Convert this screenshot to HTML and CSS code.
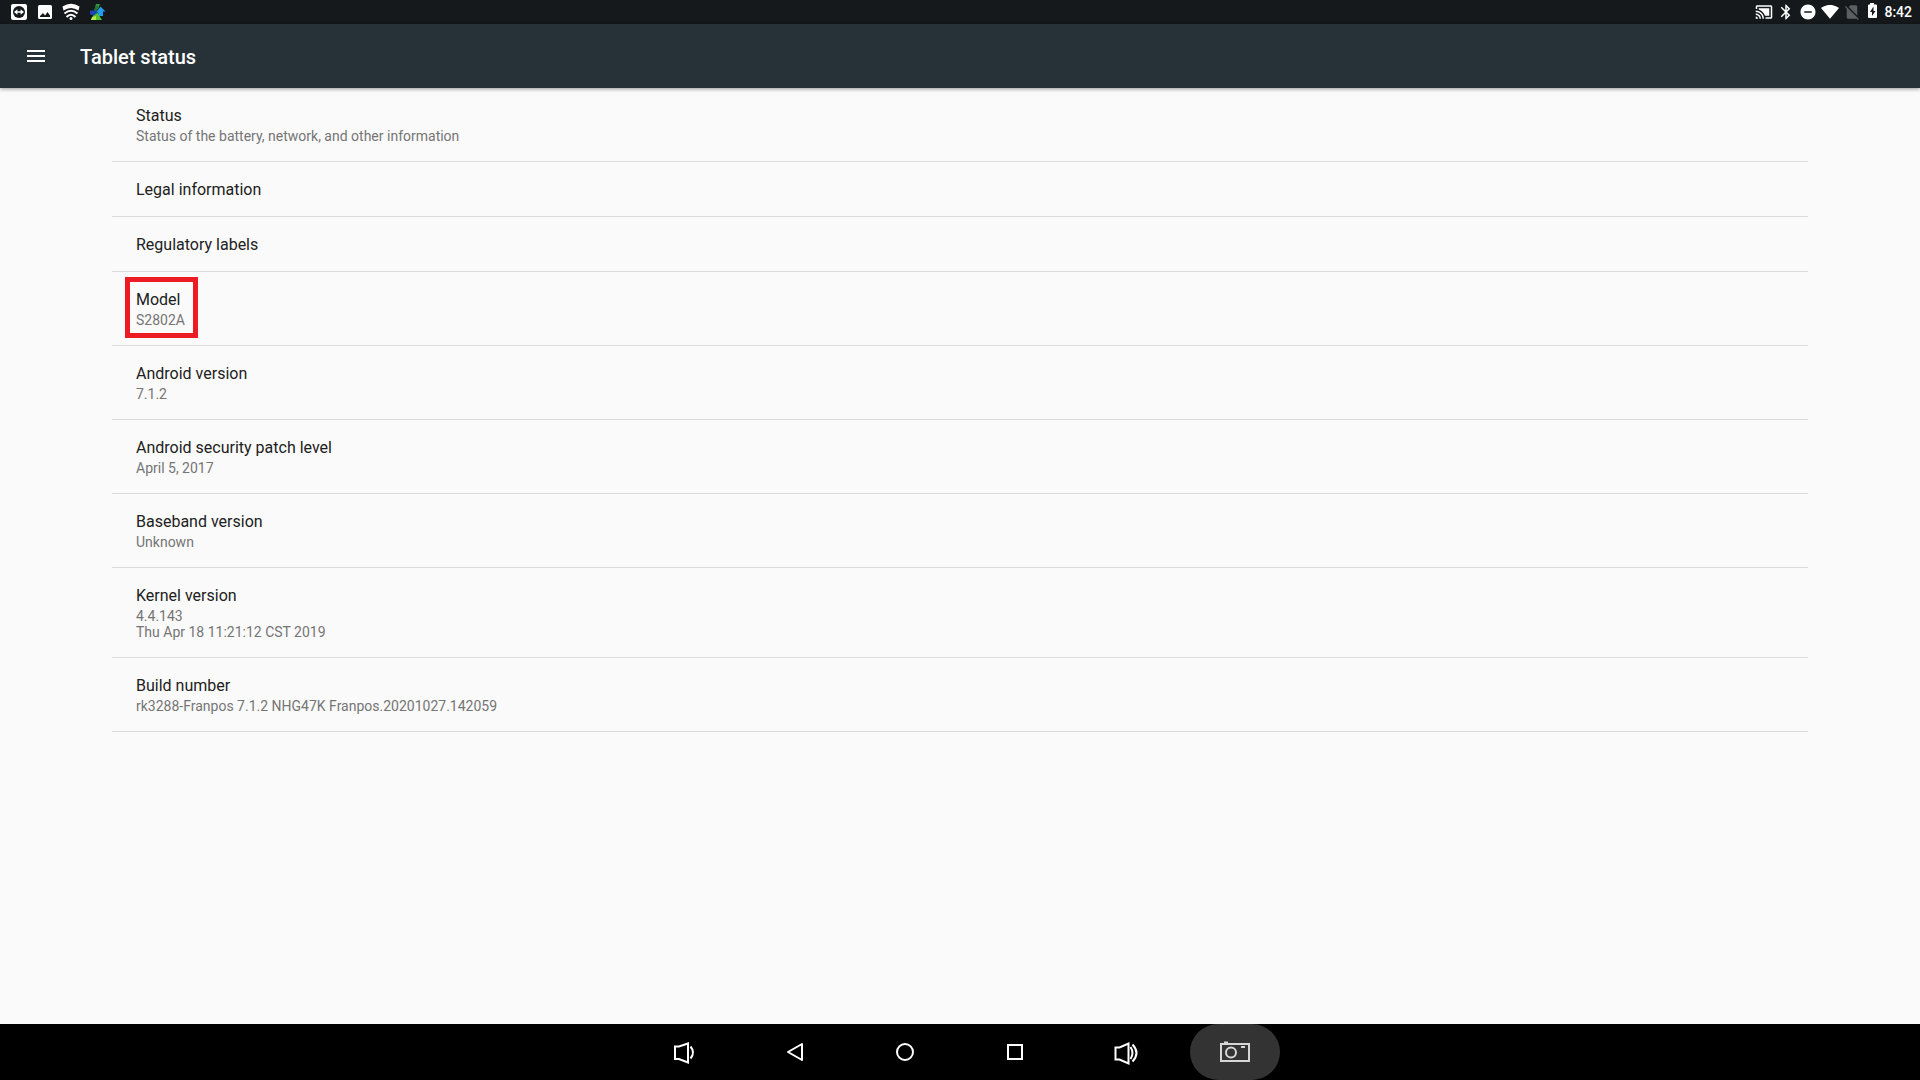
FILE: index.html
```
<!DOCTYPE html>
<html lang="en">
<head>
    <meta charset="UTF-8">
    <meta name="viewport" content="width=device-width, initial-scale=1.0">
    <title>Tablet status</title>
    <link rel="stylesheet" href="styles.css">
</head>
<body>
    <div class="status-bar">
        <div class="notifications">
            <!-- remote control -->
            <svg width="20" height="20" viewBox="0 0 20 20">
                <rect x="2" y="2" width="16" height="16" rx="2" fill="#fff"/>
                <circle cx="10" cy="10" r="6" fill="#15191c"/>
                <path d="M5 10l3.4-2.8v2h3.2v-2L15 10l-3.4 2.8v-2H8.4v2z" fill="#fff"/>
            </svg>
            <!-- picture -->
            <svg width="20" height="20" viewBox="0 0 20 20">
                <path fill="#fff" fill-rule="evenodd" d="M4.500 3h11a1.500 1.500 0 0 1 1.500 1.500v11a1.500 1.500 0 0 1-1.500 1.500h-11A1.500 1.500 0 0 1 3 15.500v-11A1.500 1.500 0 0 1 4.500 3zM5 15h10v-1.500l-2.500-3.500-2.500 3.500-2-2.500-3 3z"/>
            </svg>
            <!-- wifi -->
            <svg width="20" height="20" viewBox="0 0 20 20">
                <path d="M1.500 4.500Q10-1 18.500 4.500L17.500 8.500Q10 3.500 2.500 8.500z" fill="#fff"/>
                <g fill="none" stroke="#fff" stroke-width="2">
                    <path d="M3.500 11.500q6.500-5.500 13 0"/>
                    <path d="M5.500 15q4.500-4.500 9 0"/>
                </g>
                <circle cx="10" cy="16.500" r="1.500" fill="#fff"/>
            </svg>
            <!-- file transfer -->
            <svg width="20" height="20" viewBox="0 0 20 20">
                <path d="M9 2h4l-2 5-4 2z" fill="#2f9e3e"/>
                <path d="M8 5l3-2-1 6-3 2z" fill="#1e7133"/>
                <path d="M7 12l4-1 2 4 2 3H4z" fill="#52c22b"/>
                <path d="M5 15l4-1v4H4z" fill="#b4e84a"/>
                <path d="M3 8.500h5l2 2-3 3-4-1z" fill="#1b45b5"/>
                <path d="M13.500 4.500l5 5H16V14h-4l-1-3.500H9z" fill="#239bf0"/>
            </svg>
        </div>
        <div class="system-icons">
            <svg width="18" height="18" viewBox="0 0 24 24" fill="#fff">
                <path d="M1 18v3h3c0-1.660-1.340-3-3-3zm0-4v2c2.760 0 5 2.240 5 5h2c0-3.870-3.130-7-7-7zM19 7H5v1.630c3.960 1.280 7.090 4.410 8.370 8.370H19V7zM1 10v2c4.970 0 9 4.030 9 9h2c0-6.080-4.930-11-11-11zm20-7H3c-1.100 0-2 .900-2 2v3h2V5h18v14h-7v2h7c1.100 0 2-.900 2-2V5c0-1.100-.900-2-2-2z"/>
            </svg>
            <svg width="18" height="18" viewBox="0 0 24 24" fill="#fff">
                <path d="M17.710 7.710L12 2h-1v7.590L6.410 5 5 6.410 10.590 12 5 17.590 6.410 19 11 14.410V22h1l5.710-5.710-4.300-4.290 4.300-4.290zM13 5.830l1.880 1.880L13 9.590V5.830zm1.880 10.460L13 18.170v-3.760l1.880 1.880z"/>
            </svg>
            <svg width="18" height="18" viewBox="0 0 24 24" fill="#fff">
                <path d="M12 2C6.480 2 2 6.480 2 12s4.480 10 10 10 10-4.480 10-10S17.520 2 12 2zm5 11H7v-2h10v2z"/>
            </svg>
            <svg width="18" height="18" viewBox="0 0 24 24" fill="#fff">
                <path d="M12 21L24 6.500C23.500 6.200 19 2.500 12 2.500S.500 6.200 0 6.500z"/>
            </svg>
            <svg width="18" height="18" viewBox="0 0 24 24" fill="#5c5f61">
                <path d="M19 5c0-1.100-.900-2-2-2h-7L7.660 5.340 19 16.680V5zM3.650 3.880L2.380 5.150 5 7.770V19c0 1.100.900 2 2 2h10c.350 0 .680-.100.970-.260l1.880 1.880 1.270-1.270z"/>
            </svg>
            <svg width="14" height="18" viewBox="0 0 14 18">
                <path d="M5 0h4v1.500h2a1 1 0 0 1 1 1V14a1 1 0 0 1-1 1H4a1 1 0 0 1-1-1V2.500a1 1 0 0 1 1-1h1z" fill="#fff"/>
                <path d="M8.500 3.500V8h2L7 13V9H5z" fill="#15191c"/>
            </svg>
            <time class="clock">8:42</time>
        </div>
    </div>

    <header class="app-bar">
        <button class="menu-button" type="button" aria-label="Menu">
            <svg width="24" height="24" viewBox="0 0 24 24" fill="#fff">
                <path d="M3 6h18v2H3zM3 11h18v2H3zM3 16h18v2H3z"/>
            </svg>
        </button>
        <h1>Tablet status</h1>
    </header>

    <main>
        <ul class="preferences">
            <li>
                <button class="preference" type="button">
                    <span class="title">Status</span>
                    <span class="summary">Status of the battery, network, and other information</span>
                </button>
            </li>
            <li>
                <button class="preference" type="button">
                    <span class="title">Legal information</span>
                </button>
            </li>
            <li>
                <button class="preference" type="button">
                    <span class="title">Regulatory labels</span>
                </button>
            </li>
            <li>
                <button class="preference" type="button">
                    <span class="highlight">
                        <span class="title">Model</span>
                        <span class="summary">S2802A</span>
                    </span>
                </button>
            </li>
            <li>
                <button class="preference" type="button">
                    <span class="title">Android version</span>
                    <span class="summary">7.1.2</span>
                </button>
            </li>
            <li>
                <button class="preference" type="button">
                    <span class="title">Android security patch level</span>
                    <span class="summary">April 5, 2017</span>
                </button>
            </li>
            <li>
                <button class="preference" type="button">
                    <span class="title">Baseband version</span>
                    <span class="summary">Unknown</span>
                </button>
            </li>
            <li>
                <button class="preference" type="button">
                    <span class="title">Kernel version</span>
                    <span class="summary">4.4.143<br>Thu Apr 18 11:21:12 CST 2019</span>
                </button>
            </li>
            <li>
                <button class="preference" type="button">
                    <span class="title">Build number</span>
                    <span class="summary">rk3288-Franpos 7.1.2 NHG47K Franpos.20201027.142059</span>
                </button>
            </li>
        </ul>
    </main>

    <nav class="nav-bar">
        <button type="button" aria-label="Volume down">
            <svg width="32" height="32" viewBox="0 0 32 32" fill="none" stroke="#fff" stroke-width="2">
                <path d="M6 10.500h4l9-3v19l-9-3.500H6z"/>
                <path d="M21.500 10.500q5 6 0 12" stroke-width="2"/>
            </svg>
        </button>
        <button type="button" aria-label="Back">
            <svg width="32" height="32" viewBox="0 0 32 32" fill="none" stroke="#fff" stroke-width="2" stroke-linejoin="round">
                <path d="M23 8v16L9 16z"/>
            </svg>
        </button>
        <button type="button" aria-label="Home">
            <svg width="32" height="32" viewBox="0 0 32 32" fill="none" stroke="#fff" stroke-width="2">
                <circle cx="16" cy="16" r="8"/>
            </svg>
        </button>
        <button type="button" aria-label="Recent apps">
            <svg width="32" height="32" viewBox="0 0 32 32" fill="none" stroke="#fff" stroke-width="2">
                <rect x="9" y="9" width="14" height="14"/>
            </svg>
        </button>
        <button type="button" aria-label="Volume up">
            <svg width="32" height="32" viewBox="0 0 32 32" fill="none" stroke="#fff" stroke-width="2">
                <path d="M6.500 11.500h4l9-4v20l-9-4h-4z"/>
                <path d="M21.500 11q4 6 0 12M23.500 8.500q8 8.500 0 17" stroke-width="2"/>
            </svg>
        </button>
        <button class="pressed" type="button" aria-label="Screenshot">
            <svg width="32" height="32" viewBox="0 0 32 32" fill="none" stroke="#d6d6d6" stroke-width="2">
                <rect x="2" y="8" width="28" height="17"/>
                <circle cx="12" cy="16.500" r="5"/>
                <path d="M5 6.500h4M22 11h4"/>
            </svg>
        </button>
    </nav>
</body>
</html>
```
FILE: styles.css
```
* {
    box-sizing: border-box;
}
body {
    margin: 0;
    min-height: 100vh;
    display: flex;
    flex-direction: column;
    background: #fafafa;
    color: #212121;
    font-family: Roboto, sans-serif;
}
button {
    margin: 0;
    padding: 0;
    border: none;
    background: none;
    color: inherit;
    font: inherit;
    cursor: pointer;
}
svg {
    display: block;
    flex: none;
}

/* top bars */
.status-bar {
    height: 24px;
    padding: 0 8px 0 9px;
    display: flex;
    align-items: center;
    justify-content: space-between;
    background: #15191c;
    color: #fff;
}
.notifications {
    display: flex;
    gap: 6px;
}
.system-icons {
    display: flex;
    align-items: center;
    gap: 4px;
}
.clock {
    margin-left: 1px;
    font-size: 14px;
    font-weight: 500;
    line-height: 24px;
}
.app-bar {
    height: 64px;
    padding-left: 24px;
    display: flex;
    align-items: center;
    gap: 32px;
    background: #263238;
    color: #fff;
    box-shadow: 0 1px 4px rgba(0, 0, 0, 0.4);
}
h1 {
    margin: 0;
    padding-top: 2px;
    font-size: 20px;
    font-weight: 500;
    line-height: 24px;
}

/* list */
main {
    flex: 1;
    padding: 0 112px;
}
.preferences {
    margin: 0;
    padding: 0;
    list-style: none;
}
.preferences li {
    border-bottom: 1px solid #dadada;
}
.preference {
    display: block;
    width: 100%;
    padding: 17px 24px 15px;
    text-align: left;
}
.title {
    display: block;
    font-size: 16px;
    line-height: 22px;
}
.summary {
    display: block;
    padding: 1px 0 2px;
    color: #757575;
    font-size: 14px;
    line-height: 16px;
}
.highlight {
    display: block;
    width: fit-content;
    position: relative;
}
.highlight::after {
    content: "";
    position: absolute;
    inset: -12px -13px -8px -11px;
    border: 5px solid #ed1c24;
}

/* bottom bar */
.nav-bar {
    height: 56px;
    display: flex;
    justify-content: center;
    gap: 20px;
    background: #000;
}
.nav-bar button {
    width: 90px;
    display: flex;
    align-items: center;
    justify-content: center;
    border-radius: 28px;
}
.nav-bar .pressed {
    background: #333;
}
```
